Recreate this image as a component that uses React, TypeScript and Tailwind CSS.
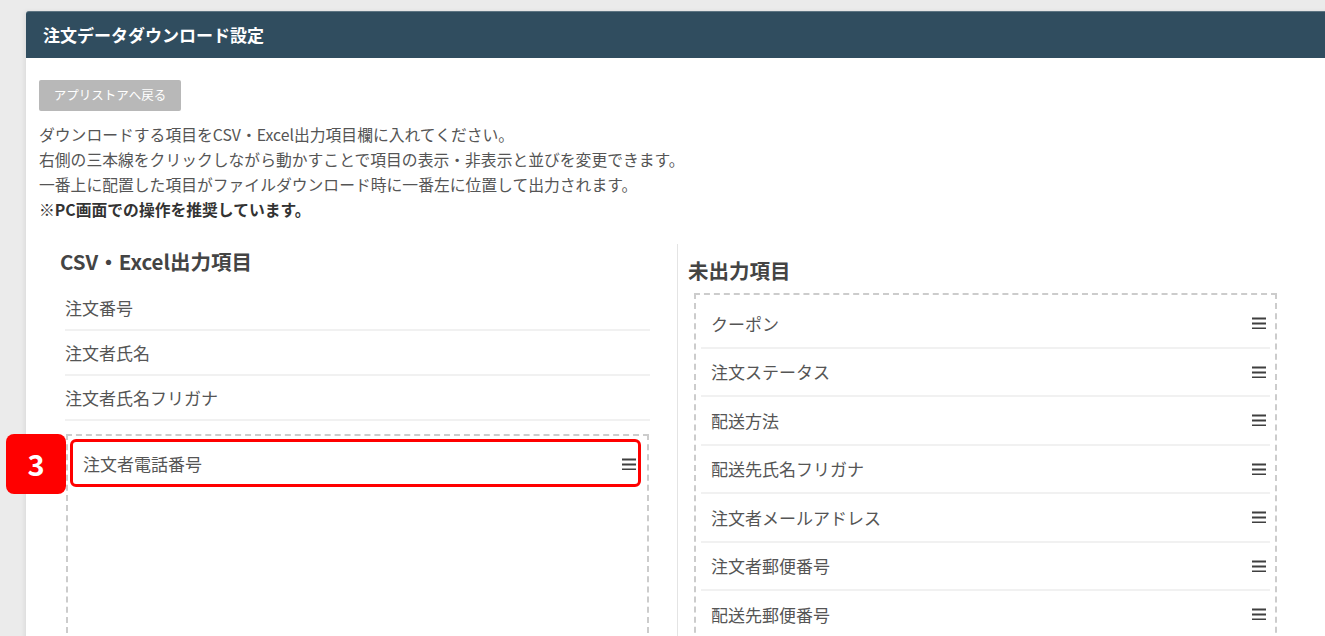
import React from 'react'

const font = { fontFamily: '"Noto Sans CJK JP", "Noto Sans", sans-serif' }

const outputItems = ['注文番号', '注文者氏名', '注文者氏名フリガナ']

const unusedItems = [
  'クーポン',
  '注文ステータス',
  '配送方法',
  '配送先氏名フリガナ',
  '注文者メールアドレス',
  '注文者郵便番号',
  '配送先郵便番号',
]

function Bars() {
  return (
    <svg width="16" height="12" viewBox="0 0 16 12" className="shrink-0">
      <rect x="1" y="0.5" width="14" height="2" fill="#3f3f3f" />
      <rect x="1" y="5.5" width="14" height="2" fill="#3f3f3f" />
      <rect x="1" y="10.5" width="14" height="2" fill="#3f3f3f" />
    </svg>
  )
}

export default function App() {
  return (
    <div className="min-h-screen bg-[#ebebeb] pt-[11px] pl-[26px] overflow-hidden" style={font}>
      <div className="bg-white w-[1320px] rounded-tl-[3px] shadow-[-2px_0_4px_rgba(0,0,0,0.06)]">
        {/* header */}
        <div className="h-[47px] bg-[#304d5f] border-t border-[#5d7482] flex items-center pl-[17px] rounded-tl-[3px]">
          <h1 className="text-white font-bold text-[17px]">注文データダウンロード設定</h1>
        </div>

        <div className="px-[13px] pt-[22px]">
          <button className="w-[142px] h-[31px] bg-[#b8b8b8] rounded-[2px] text-white text-[12.5px] flex items-center justify-center">
            アプリストアへ戻る
          </button>

          <div className="mt-[11px] text-[15.8px] leading-[25px] text-[#555]">
            <p>ダウンロードする項目をCSV・Excel出力項目欄に入れてください。</p>
            <p>右側の三本線をクリックしながら動かすことで項目の表示・非表示と並びを変更できます。</p>
            <p>一番上に配置した項目がファイルダウンロード時に一番左に位置して出力されます。</p>
            <p className="font-bold text-[#333]">※PC画面での操作を推奨しています。</p>
          </div>

          {/* columns */}
          <div className="mt-[22px] ml-[11px] flex">
            {/* left column */}
            <div className="w-[628px] border-r border-[#e4e4e4] pt-[3px]">
              <h2 className="pl-[10px] text-[20.5px] leading-[28px] font-bold text-[#444]">CSV・Excel出力項目</h2>
              <ul className="mt-[11px] pl-[15px] pr-[27px]">
                {outputItems.map((item) => (
                  <li
                    key={item}
                    className="h-[45px] border-b-2 border-[#f1f1f1] flex items-center text-[17px] text-[#555]"
                  >
                    {item}
                  </li>
                ))}
              </ul>
              <div className="relative mt-[13px] ml-[16px] w-[583px] h-[260px] border-2 border-dashed border-[#cccccc] pt-[3px] pl-[2px] pr-[6px]">
                <div className="absolute -left-[62px] -top-[2px] w-[60px] h-[60px] bg-[#ff0000] rounded-lg flex items-center justify-center text-white font-bold text-[29px]">
                  3
                </div>
                <div className="h-[48px] border-[3px] border-[#ff0000] rounded-md flex items-center justify-between pl-[10px] pr-[1px] pt-[2px] text-[17px] text-[#555]">
                  <span>注文者電話番号</span>
                  <Bars />
                </div>
              </div>
            </div>

            {/* right column */}
            <div className="w-[628px] pt-[12px]">
              <h2 className="pl-[10px] text-[20.5px] leading-[28px] font-bold text-[#444]">未出力項目</h2>
              <div className="mt-[9px] ml-[16px] w-[583px] h-[360px] border-2 border-dashed border-[#cccccc] px-[5px] pt-[5px]">
                <ul>
                  {unusedItems.map((item) => (
                    <li
                      key={item}
                      className="h-[48.5px] border-b-2 border-[#f1f1f1] flex items-center justify-between pl-[10px] pr-[3px] text-[17px] text-[#555]"
                    >
                      <span>{item}</span>
                      <Bars />
                    </li>
                  ))}
                </ul>
              </div>
            </div>
          </div>
        </div>
      </div>
    </div>
  )
}
